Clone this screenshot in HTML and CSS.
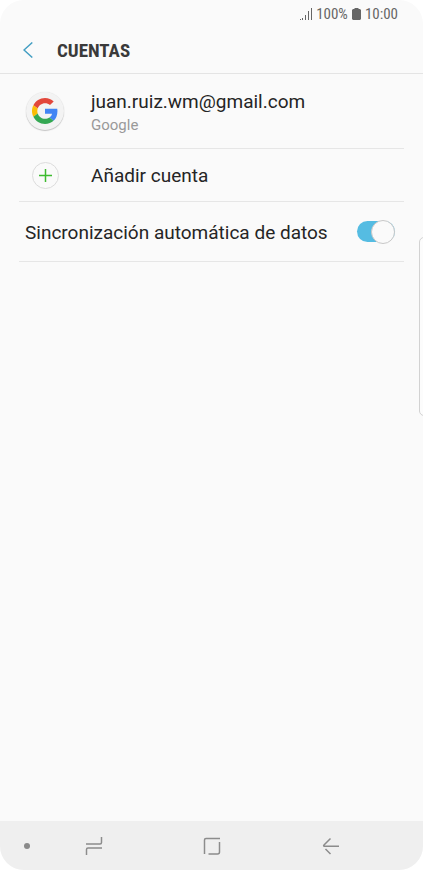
FILE: index.html
```html
<!DOCTYPE html>
<html lang="es">
<head>
<meta charset="utf-8">
<meta name="viewport" content="width=device-width, initial-scale=1">
<title>Cuentas</title>
<link rel="stylesheet" href="styles.css">
</head>
<body>
<div class="phone">
  <div class="status">
    <svg class="signal" viewBox="0 0 12 12" aria-hidden="true"><path d="M0 11h1v1H0zM2 10h1v2H2zM5 7h1v5H5zM8 3h1v9H8zM11 0h1v12h-1z"/></svg>
    <span>100%</span>
    <svg class="battery" viewBox="0 0 9 12" aria-hidden="true"><path d="M2.500 0h4v1H8l1 1v9l-1 1H1l-1-1V2l1-1h1.500z"/></svg>
    <span>10:00</span>
  </div>
  <header class="header">
    <button class="back" type="button" aria-label="Atrás">
      <svg viewBox="0 0 10 16" aria-hidden="true"><path d="M9.300.5 1 8l8.300 7.500"/></svg>
    </button>
    <h1 class="title">CUENTAS</h1>
  </header>
  <main class="list">
    <a class="row account" href="#cuenta">
      <span class="lead"><span class="avatar">
        <svg viewBox="0 0 48 48" aria-hidden="true">
          <path fill="#e2473b" d="M24 9.500c3.540 0 6.710 1.220 9.210 3.600l6.850-6.850C35.900 2.380 30.470 0 24 0 14.620 0 6.510 5.380 2.560 13.220l7.980 6.190C12.430 13.720 17.740 9.500 24 9.500z"/>
          <path fill="#4285f4" d="M46.980 24.550c0-1.570-.15-3.090-.38-4.550H24v9.020h12.940c-.58 2.960-2.260 5.480-4.780 7.180l7.730 6c4.510-4.180 7.090-10.360 7.090-17.650z"/>
          <path fill="#fbbc05" d="M10.530 28.590c-.48-1.450-.76-2.990-.76-4.590s.27-3.140.76-4.590l-7.980-6.190C.92 16.460 0 20.120 0 24s.92 7.540 2.560 10.780z"/>
          <path fill="#34a853" d="M24 48c6.480 0 11.930-2.130 15.890-5.810l-7.730-6c-2.150 1.450-4.920 2.300-8.160 2.300-6.260 0-11.570-4.220-13.470-9.910l-7.980 6.190C6.510 42.620 14.620 48 24 48z"/>
        </svg>
      </span></span>
      <span class="text">
        <span class="label">juan.ruiz.wm@gmail.com</span>
        <span class="sub">Google</span>
      </span>
    </a>
    <button class="row add" type="button">
      <span class="lead"><span class="plus">
        <svg viewBox="0 0 13 13" aria-hidden="true"><path d="M6.500 0v13M0 6.500h13"/></svg>
      </span></span>
      <span class="label">Añadir cuenta</span>
    </button>
    <div class="row sync">
      <label class="label" for="sync">Sincronización automática de datos</label>
      <input class="switch" id="sync" type="checkbox" role="switch" checked>
    </div>
  </main>
  <div class="edge" aria-hidden="true"></div>
  <nav class="nav">
    <button type="button" aria-label="Ocultar barra"><span class="dot"></span></button>
    <button type="button" aria-label="Recientes"><svg viewBox="0 0 18 20" aria-hidden="true"><path d="M1 8h14q1.500 0 1.500-1.500V1M17 12H3q-1.500 0-1.500 1.500V19"/></svg></button>
    <button type="button" aria-label="Inicio"><svg viewBox="0 0 18 20" aria-hidden="true"><path d="M1.500 18V4q0-1.500 1.500-1.500h14M16.500 6v10q0 2-2 2H5.500"/></svg></button>
    <button type="button" aria-label="Volver"><svg viewBox="0 0 18 20" aria-hidden="true"><path d="M8.500 2.500 2 9q-1 1.200.5 1.200H17M3.500 13l5 5"/></svg></button>
  </nav>
</div>
</body>
</html>
```
FILE: styles.css
```css
* {
  box-sizing: border-box;
}

body {
  margin: 0;
  background: #fff;
  color: #252525;
  font-family: Roboto, "Liberation Sans", sans-serif;
}

button {
  padding: 0;
  border: 0;
  background: none;
  color: inherit;
  font: inherit;
  text-align: left;
}

svg {
  display: block;
  fill: none;
}

.phone {
  position: relative;
  display: flex;
  flex-direction: column;
  min-height: 100vh;
  overflow: hidden;
  border-radius: 24px;
  background: #fafafa;
}

.status {
  display: flex;
  align-items: center;
  justify-content: flex-end;
  gap: 4px;
  height: 27px;
  padding-right: 25px;
  color: #666;
  font-family: "Roboto Condensed", Roboto, sans-serif;
  font-size: 15px;
}

.status svg {
  height: 12px;
  fill: #666;
}

.signal {
  width: 12px;
}

.battery {
  width: 9px;
}

.header {
  display: flex;
  align-items: center;
  gap: 24px;
  height: 47px;
  padding-left: 23px;
  border-bottom: 1px solid #e4e4e4;
}

.back svg {
  width: 10px;
  height: 16px;
  stroke: #459fc3;
  stroke-width: 1.5;
}

.title {
  margin: 0;
  color: #3a3a3a;
  font-family: "Roboto Condensed", Roboto, sans-serif;
  font-size: 19px;
  font-weight: 700;
}

.list {
  display: flex;
  flex: 1;
  flex-direction: column;
  padding: 0 19px;
}

.row {
  display: flex;
  align-items: center;
  border-bottom: 1px solid #e6e6e6;
  color: inherit;
  text-decoration: none;
}

.account {
  height: 75px;
}

.add {
  height: 53px;
}

.sync {
  justify-content: space-between;
  height: 60px;
  padding: 0 9px 0 6px;
}

.lead {
  display: flex;
  flex: none;
  justify-content: center;
  width: 52px;
  margin-right: 20px;
}

.avatar,
.plus {
  display: grid;
  place-items: center;
  border-radius: 50%;
}

.avatar {
  width: 38px;
  height: 38px;
  background: #f3f3f3;
  box-shadow: 0 1px 1px #c4c4c4, 0 0 1px #ddd;
}

.avatar svg {
  width: 26px;
  height: 26px;
}

.plus {
  width: 27px;
  height: 27px;
  border: 1px solid #dcdcdc;
}

.plus svg {
  width: 13px;
  height: 13px;
  stroke: #3dbb2f;
  stroke-width: 1.5;
}

.text {
  display: flex;
  flex-direction: column;
  padding-top: 4px;
}

.label {
  font-size: 19px;
  line-height: 24px;
}

.add .label,
.sync .label {
  padding-top: 2px;
}

.sub {
  color: #999;
  font-size: 15px;
  line-height: 22px;
}

.switch {
  appearance: none;
  display: flex;
  align-items: center;
  width: 38px;
  height: 21px;
  margin: 0;
  border-radius: 11px;
  background: #ccc;
}

.switch::before {
  content: "";
  width: 22px;
  height: 22px;
  flex: none;
  border: 1px solid #c8c8c8;
  border-radius: 50%;
  background: #fafafa;
}

.switch:checked {
  justify-content: flex-end;
  background: #55bce2;
}

.edge {
  position: absolute;
  top: 237px;
  right: -8px;
  width: 12px;
  height: 179px;
  border: 1px solid #d2d2d2;
  border-radius: 5px;
  background: #fcfcfc;
}

.nav {
  display: grid;
  grid-template-columns: 54px 80px 1fr 82px 51px;
  height: 49px;
  background: #efefef;
}

.nav button {
  display: grid;
  place-items: center;
}

.nav svg {
  width: 18px;
  height: 20px;
  stroke: #8c8c8c;
  stroke-width: 1.5;
}

.dot {
  width: 6px;
  height: 6px;
  border-radius: 50%;
  background: #8a8a8a;
}
```
